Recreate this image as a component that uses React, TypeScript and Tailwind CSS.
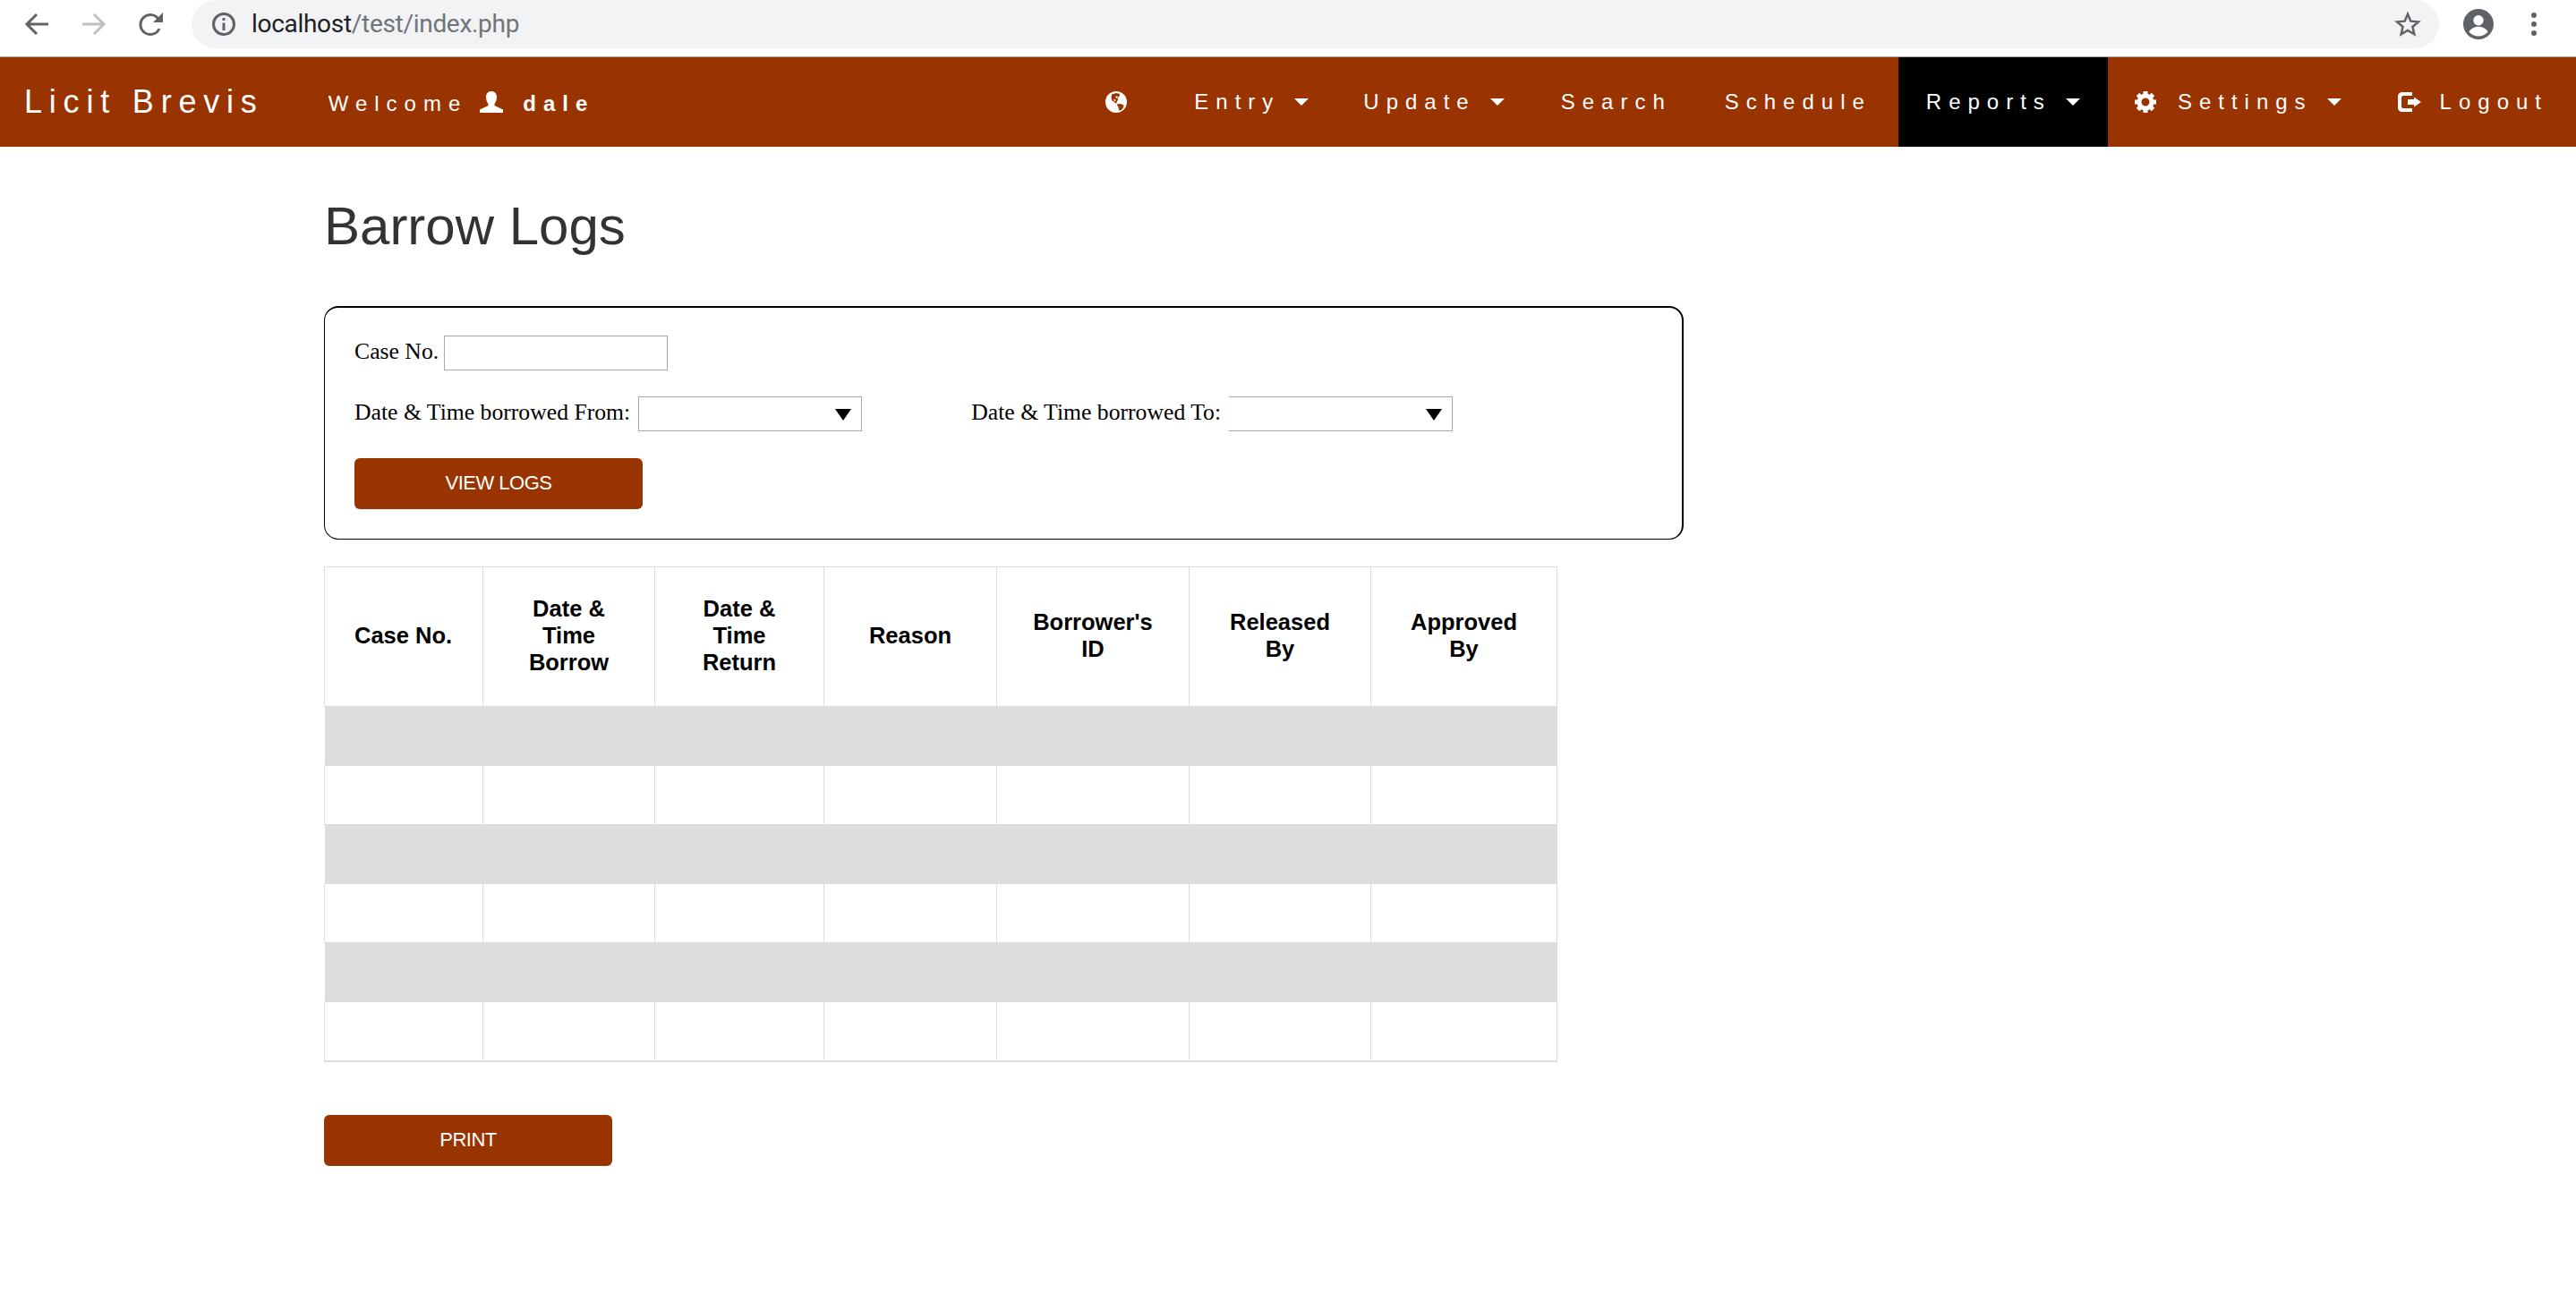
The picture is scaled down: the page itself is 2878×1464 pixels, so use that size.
import React from 'react';

const columns = [
  { width: 'w-[177px]', label: ['Case No.'], align: 'text-left pl-[33px]' },
  { width: 'w-[192px]', label: ['Date &', 'Time', 'Borrow'], align: 'text-center' },
  { width: 'w-[189px]', label: ['Date &', 'Time', 'Return'], align: 'text-center' },
  { width: 'w-[193px]', label: ['Reason'], align: 'text-center' },
  { width: 'w-[215px]', label: ["Borrower's", 'ID'], align: 'text-center' },
  { width: 'w-[203px]', label: ['Released', 'By'], align: 'text-center' },
  { width: 'w-[208px]', label: ['Approved', 'By'], align: 'text-center' },
];

const rows = [0, 1, 2, 3, 4, 5];
const gearTeeth = [0, 45, 90, 135, 180, 225, 270, 315];

function Caret() {
  return <span className="ml-[16px] inline-block h-0 w-0 border-x-[8px] border-t-[8px] border-x-transparent border-t-white align-middle" />;
}

function GlobeIcon() {
  return (
    <svg viewBox="0 0 24 24" className="h-[24px] w-[24px]">
      <circle cx="12" cy="12" r="12" fill="#fff" />
      <path fill="#993300" d="M7 3.500l5-1.500 4 1-.5 3-2 1 .5 2.500-1.500 3-1 1.500-1.500-2-2.500-1.500-1-3.500z" />
      <path fill="#fff" d="M11.500 5.500h2v2h-2zM9.500 8.500l2 1-.5 2-1.500-1z" />
      <path fill="#993300" d="M13 14.500l4-.5 3.500 1.500-.5 3-3 3-2-.5-.5-3.500-1.500-2z" />
    </svg>
  );
}

function UserIcon() {
  return (
    <svg viewBox="0 0 26 24" className="h-[24px] w-[26px]">
      <path fill="#fff" d="M13 0c3.600 0 6 2.400 6 6.500 0 3-1 5.500-2.500 7.500v2l9.500 4.500V24H0v-3.500L9.500 16v-2C8 12 7 9.500 7 6.500 7 2.400 9.400 0 13 0z" />
    </svg>
  );
}

function GearIcon() {
  return (
    <svg viewBox="0 0 24 24" className="h-[24px] w-[24px]">
      {gearTeeth.map((deg) => (
        <rect key={deg} x="9.500" y="0" width="5" height="6" fill="#fff" transform={`rotate(${deg} 12 12)`} />
      ))}
      <circle cx="12" cy="12" r="7" fill="none" stroke="#fff" strokeWidth="5" />
    </svg>
  );
}

function LogoutIcon() {
  return (
    <svg viewBox="0 0 26 22" className="h-[22px] w-[26px]">
      <path fill="#fff" d="M5 0h11v4H6C5 4 4 5 4 6v10c0 1 1 2 2 2h10v4H5c-3 0-5-2-5-5V5c0-3 2-5 5-5z" />
      <path fill="#fff" d="M11 8h7V5.500l8 5.500-8 5.500V14h-7z" />
    </svg>
  );
}

function DateSelect({ noLeftBorder }: { noLeftBorder?: boolean }) {
  return (
    <div className="relative">
      <select
        className={`block h-[39px] w-[250px] appearance-none border border-[#a9a9a9] bg-white ${noLeftBorder ? 'border-l-0' : ''}`}
      />
      <span className="absolute right-[12px] top-[14px] h-0 w-0 border-x-[9px] border-t-[13px] border-x-transparent border-t-black" />
    </div>
  );
}

export default function App() {
  return (
    <div className="min-h-[1464px] bg-white font-['Liberation_Sans',sans-serif]">
      {/* browser toolbar */}
      <div className="flex h-[63px] items-start bg-white">
        <div className="flex h-[54px] w-[214px] items-center">
          <svg viewBox="0 0 28 28" className="ml-[27px] h-[28px] w-[28px]" fill="none" stroke="#5f6368" strokeWidth="3">
            <path d="M27 14H3M14 3L3 14l11 11" />
          </svg>
          <svg viewBox="0 0 28 28" className="ml-[36px] h-[28px] w-[28px]" fill="none" stroke="#bdc1c6" strokeWidth="3">
            <path d="M1 14h24M14 3l11 11-11 11" />
          </svg>
          <svg viewBox="0 0 28 28" className="ml-[36px] h-[28px] w-[28px]">
            <path fill="none" stroke="#5f6368" strokeWidth="3" d="M23 19a11 11 0 11-.5-10" />
            <path fill="#5f6368" d="M27 1v11H16z" />
          </svg>
        </div>
        <div className="flex h-[54px] w-[2511px] items-center rounded-[27px] bg-[#f1f3f4] pr-[20px]">
          <svg viewBox="0 0 28 28" className="ml-[22px] h-[28px] w-[28px]" fill="none" stroke="#5f6368" strokeWidth="3">
            <circle cx="14" cy="14" r="11.500" />
            <path d="M14 12.500V21M14 7v3" />
          </svg>
          <span className="ml-[17px] font-['Roboto',sans-serif] text-[28px] tracking-[-0.3px] text-[#202124]">
            localhost<span className="text-[#70757a]">/test/index.php</span>
          </span>
          <svg viewBox="0 0 24 24" className="ml-auto h-[30px] w-[30px]" fill="none" stroke="#5f6368" strokeWidth="2">
            <path d="M12 3l2.700 6.300 6.800.6-5.200 4.500 1.600 6.600L12 17.500 6.100 21l1.600-6.600L2.500 9.900l6.800-.6z" />
          </svg>
        </div>
        <div className="flex h-[54px] items-center">
          <svg viewBox="0 0 24 24" className="ml-[27px] h-[34px] w-[34px]">
            <circle cx="12" cy="12" r="12" fill="#5f6368" />
            <circle cx="12" cy="9" r="4" fill="#fff" />
            <path fill="#fff" d="M4.500 18c2-3 5-4 7.500-4s5.500 1 7.500 4c-2 2.500-4.700 3.500-7.500 3.500S6.500 20.500 4.500 18z" />
          </svg>
          <div className="ml-[42px] flex flex-col gap-[4px]">
            <span className="h-[6px] w-[6px] rounded-full bg-[#5f6368]" />
            <span className="h-[6px] w-[6px] rounded-full bg-[#5f6368]" />
            <span className="h-[6px] w-[6px] rounded-full bg-[#5f6368]" />
          </div>
        </div>
      </div>

      {/* nav */}
      <nav className="flex h-[101px] items-center border-t border-t-[#a9a9a9] bg-[#993300] text-white">
        <span className="ml-[27px] text-[36px] leading-none tracking-[7.800px]">Licit Brevis</span>
        <span className="ml-[72px] mt-[3px] flex items-center text-[24px] tracking-[8px]">
          Welcome
          <span className="ml-[14px] mr-[22px] -mt-[4px]"><UserIcon /></span>
          <span className="font-bold">dale</span>
        </span>
        <ul className="ml-auto flex h-full items-stretch text-[24px] tracking-[8px]">
          <li className="flex items-center pr-[75px]"><GlobeIcon /></li>
          <li className="flex items-center pr-[61px]">Entry<Caret /></li>
          <li className="flex items-center pr-[63px]">Update<Caret /></li>
          <li className="flex items-center pr-[59px]">Search</li>
          <li className="flex items-center pr-[30px]">Schedule</li>
          <li className="flex items-center bg-black pl-[31px] pr-[31px]">Reports<Caret /></li>
          <li className="flex items-center pl-[30px] pr-[63px]">
            <span className="mr-[24px]"><GearIcon /></span>Settings<Caret />
          </li>
          <li className="flex items-center pr-[31px]">
            <span className="mr-[21px]"><LogoutIcon /></span>Logout
          </li>
        </ul>
      </nav>

      <main className="ml-[362px]">
        <h2 className="pt-[56px] text-[60px] leading-[66px] text-[#333333]">Barrow Logs</h2>

        <form className="mt-[56px] h-[261px] w-[1519px] rounded-[16px] border-t-2 border-r-2 border-b border-l border-black pl-[33px] pt-[31px] font-['Liberation_Serif',serif] text-[25.700px] text-black">
          <div className="flex h-[39px] items-center gap-[6px]">
            <label className="pb-[3px]">Case No.</label>
            <input type="text" className="h-[39px] w-[250px] border border-[#a9a9a9] bg-white" />
          </div>
          <div className="mt-[29px] flex h-[39px] items-center">
            <label className="mr-[9px] pb-[2px]">Date &amp; Time borrowed From:</label>
            <DateSelect />
            <label className="ml-[122px] mr-[9px] pb-[2px]">Date &amp; Time borrowed To:</label>
            <DateSelect noLeftBorder />
          </div>
          <button
            type="button"
            className="mt-[30px] h-[57px] w-[322px] rounded-[6px] bg-[#993300] pb-[2px] font-['Liberation_Sans',sans-serif] text-[22px] tracking-[-0.5px] text-white"
          >
            VIEW LOGS
          </button>
        </form>

        <table className="mt-[30px] w-[1377px] table-fixed border-collapse border-b-2 border-b-[#dddddd]">
          <thead>
            <tr className="h-[156px]">
              {columns.map((col) => (
                <th
                  key={col.label.join(' ')}
                  className={`${col.width} ${col.align} border border-[#dddddd] pb-[4px] text-[25.500px] font-bold leading-[30px] text-black`}
                >
                  {col.label.map((line) => (
                    <div key={line}>{line}</div>
                  ))}
                </th>
              ))}
            </tr>
          </thead>
          <tbody>
            {rows.map((row) => (
              <tr key={row} className={row % 2 === 0 ? 'h-[66px] bg-[#dddddd]' : 'h-[66px] bg-white'}>
                {columns.map((col) => (
                  <td
                    key={col.label.join(' ')}
                    className={row % 2 === 0 ? '' : 'border border-[#dddddd]'}
                  />
                ))}
              </tr>
            ))}
          </tbody>
        </table>

        <button
          type="button"
          className="mt-[59px] h-[57px] w-[322px] rounded-[6px] bg-[#993300] pb-[2px] text-[22px] tracking-[-0.5px] text-white"
        >
          PRINT
        </button>
      </main>
    </div>
  );
}
